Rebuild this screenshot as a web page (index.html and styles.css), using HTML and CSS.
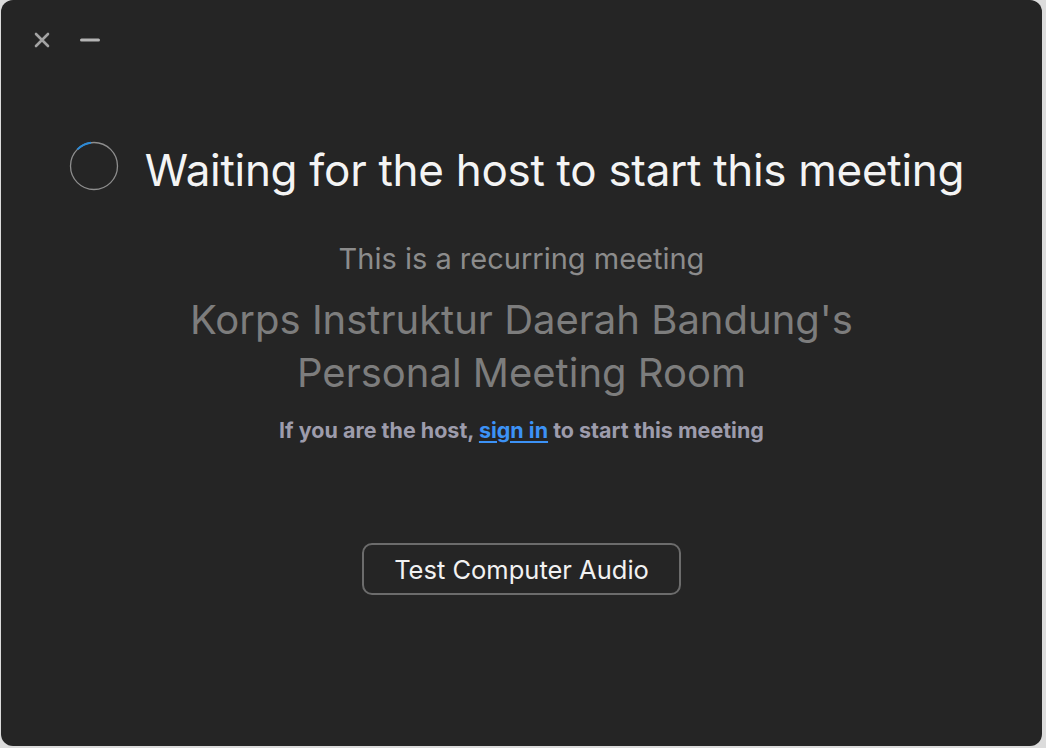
FILE: index.html
```html
<!DOCTYPE html>
<html lang="en">
<head>
<meta charset="utf-8">
<title>Waiting for host</title>
<link rel="stylesheet" href="styles.css">
</head>
<body>
<div class="desk">
  <div class="window">
    <div class="titlebar">
      <svg class="ctl close" width="16" height="16" viewBox="0 0 16 16"><path d="M2 2 L14 14 M14 2 L2 14" stroke="#a3a3a3" stroke-width="2.6" stroke-linecap="round"/></svg>
      <svg class="ctl min" width="20" height="4" viewBox="0 0 20 4"><path d="M1.5 2 H18.5" stroke="#b4b4b4" stroke-width="3" stroke-linecap="round"/></svg>
    </div>
    <div class="content">
      <div class="heading">
        <svg class="spinner" width="50" height="50" viewBox="0 0 50 50">
          <circle cx="25" cy="25" r="23.5" fill="none" stroke="#8e8e8e" stroke-width="1.3"/>
          <path d="M8.4 8.4 A23.5 23.5 0 0 1 22 1.7" fill="none" stroke="#2a8ad8" stroke-width="2"/>
        </svg>
        <h1 class="title">Waiting for the host to start this meeting</h1>
      </div>
      <p class="recurring">This is a recurring meeting</p>
      <p class="room">Korps Instruktur Daerah Bandung's<br>Personal Meeting Room</p>
      <p class="host">If you are the host, <a href="#" class="link">sign in</a> to start this meeting</p>
      <button class="audio">Test Computer Audio</button>
    </div>
  </div>
</div>
</body>
</html>
```
FILE: styles.css
```css
* { box-sizing: border-box; }
html, body { margin: 0; padding: 0; }
body {
  background: #dcdcdc;
  width: 1046px;
  height: 748px;
  overflow: hidden;
  font-family: Inter, "Noto Sans", "Liberation Sans", sans-serif;
}
.desk {
  padding: 0 4px 2px 1px;
  height: 748px;
}
.window {
  height: 746px;
  background: #252525;
  border-radius: 12px;
  display: flex;
  flex-direction: column;
}
.titlebar {
  height: 80px;
  display: flex;
  align-items: center;
  padding: 0 0 0 33px;
  gap: 30px;
}
.ctl { display: block; }
.content {
  display: flex;
  flex-direction: column;
  align-items: center;
  padding-top: 62px;
}
.heading {
  display: flex;
  align-items: center;
  gap: 26px;
  margin-right: 10px;
}
.spinner { display: block; margin-top: -8px; }
.title {
  margin: 0;
  font-size: 44px;
  font-weight: 400;
  color: #f4f4f4;
  line-height: 56px;
  letter-spacing: -0.3px;
}
.recurring {
  margin: 43px 0 0;
  font-size: 29px;
  line-height: 36px;
  color: #8c8c8c;
}
.room {
  margin: 16px 0 0;
  font-size: 40px;
  line-height: 53px;
  color: #7d7d7d;
  text-align: center;
}
.host {
  margin: 16px 0 0;
  font-size: 21.5px;
  line-height: 30px;
  font-weight: 700;
  color: #9d9cac;
}
.link {
  color: #3c92f6;
  text-decoration: underline;
  text-underline-offset: 3px;
}
.audio {
  margin-top: 98px;
  width: 319px;
  height: 52px;
  border: 2px solid #6c6c6c;
  border-radius: 10px;
  background: #252525;
  color: #f2f2f2;
  font-family: inherit;
  font-size: 25.5px;
}
```
